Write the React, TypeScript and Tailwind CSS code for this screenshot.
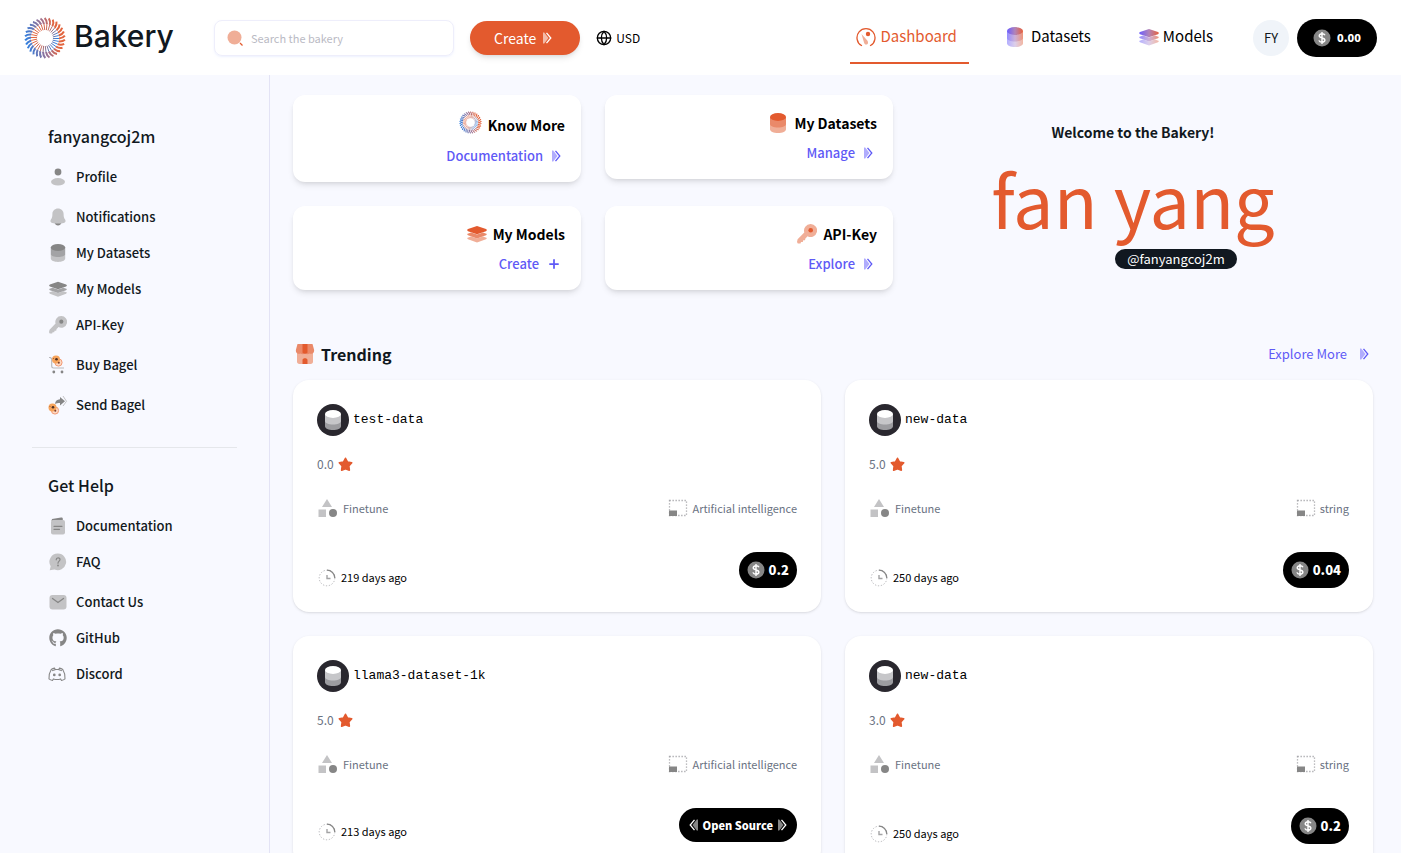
import type { ReactNode } from "react"
import { Globe, Plus } from "lucide-react"
import { FaGithub } from "react-icons/fa"

const sans = "font-['Noto_Sans_CJK_SC','Noto_Sans',sans-serif]"

const accountLinks = [
  { label: "Profile", icon: <ProfileIcon />, spaced: false },
  { label: "Notifications", icon: <BellIcon />, spaced: true },
  { label: "My Datasets", icon: <CylinderIcon tone="gray" className="mx-auto h-[18px] w-[18px]" />, spaced: false },
  { label: "My Models", icon: <LayersIcon tone="gray" className="mx-auto h-[18px] w-[18px]" />, spaced: false },
  { label: "API-Key", icon: <KeyIcon tone="gray" className="mx-auto h-[18px] w-[18px]" />, spaced: false },
  { label: "Buy Bagel", icon: <CartIcon />, spaced: true },
  { label: "Send Bagel", icon: <SendIcon />, spaced: true },
]

const helpLinks = [
  { label: "Documentation", icon: <DocIcon />, spaced: false },
  { label: "FAQ", icon: <FaqIcon />, spaced: false },
  { label: "Contact Us", icon: <MailIcon />, spaced: true },
  { label: "GitHub", icon: <FaGithub className="mx-auto h-[18px] w-[18px] text-[#868686]" />, spaced: false },
  { label: "Discord", icon: <DiscordIcon />, spaced: false },
]

const trending = [
  { name: "test-data", rating: "0.0", type: "Artificial intelligence", age: "219 days ago", price: "0.2" },
  { name: "new-data", rating: "5.0", type: "string", age: "250 days ago", price: "0.04" },
  { name: "llama3-dataset-1k", rating: "5.0", type: "Artificial intelligence", age: "213 days ago", price: null },
  { name: "new-data", rating: "3.0", type: "string", age: "250 days ago", price: "0.2" },
]

const tones = {
  gray: ["#868686", "#a3a3a5", "#c3c3c5"],
  orange: ["#e35a2e", "#ea8969", "#f0ae97"],
  light: ["#ffffff", "#c6c6c9", "#9c9ca0"],
  mixed: ["url(#mixTop)", "url(#mixMid)", "url(#mixLow)"],
}

type Tone = keyof typeof tones

function MixDefs() {
  return (
    <defs>
      <linearGradient id="mixTop">
        <stop offset="0" stopColor="#6a5cff" />
        <stop offset=".5" stopColor="#b184b8" />
        <stop offset="1" stopColor="#e8603a" />
      </linearGradient>
      <linearGradient id="mixMid">
        <stop offset="0" stopColor="#958eff" />
        <stop offset=".5" stopColor="#cbb0d8" />
        <stop offset="1" stopColor="#ee957a" />
      </linearGradient>
      <linearGradient id="mixLow">
        <stop offset="0" stopColor="#b3aeff" />
        <stop offset=".5" stopColor="#dccfea" />
        <stop offset="1" stopColor="#f2b6a2" />
      </linearGradient>
    </defs>
  )
}

function CylinderIcon({ tone, className }: { tone: Tone; className: string }) {
  const [top, mid, low] = tones[tone]
  return (
    <svg viewBox="0 0 20 20" className={className} aria-hidden="true">
      {tone === "mixed" && <MixDefs />}
      <path d="M2 11v5.200c0 2.200 3.500 3.800 8 3.800s8-1.600 8-3.800V11z" fill={low} />
      <path d="M2 4v7c0 2 3.500 3.500 8 3.500s8-1.500 8-3.500V4z" fill={mid} />
      <ellipse cx="10" cy="4" rx="8" ry="3.900" fill={top} />
    </svg>
  )
}

function LayersIcon({ tone, className }: { tone: Tone; className: string }) {
  const [top, mid, low] = tones[tone]
  return (
    <svg viewBox="0 0 20 20" className={className} aria-hidden="true">
      {tone === "mixed" && <MixDefs />}
      <path d="M0 14l4-1.500 6 2 6-2 4 1.500-1 1.300-9 3.200-9-3.200z" fill={low} />
      <path d="M0 10l4-1.500 6 2 6-2 4 1.500-1 1.300-9 3.200-9-3.200z" fill={mid} />
      <path d="M0 6l1-1 9-3 9 3 1 1-1 1.200-9 3-9-3z" fill={top} />
    </svg>
  )
}

function KeyIcon({ tone, className }: { tone: Tone; className: string }) {
  const [dark, , pale] = tones[tone]
  return (
    <svg viewBox="0 0 20 20" className={className} aria-hidden="true">
      <path
        d="M13.500 0a6.500 6.500 0 0 0-6.200 8.400L.6 15.200 0 18l.8 1.500H3.500l.5-1.400h1.800l.4-1.800H8l.4-1.900 1.500-1.300.6-.9A6.500 6.500 0 1 0 13.500 0z"
        fill={pale}
      />
      <circle cx="13.700" cy="6.300" r="2.300" fill={dark} />
    </svg>
  )
}

function ProfileIcon() {
  return (
    <svg viewBox="0 0 20 20" className="h-5 w-5" aria-hidden="true">
      <circle cx="10" cy="5" r="3.400" fill="#868686" />
      <ellipse cx="10" cy="14.800" rx="7" ry="3.700" fill="#c3c3c5" />
    </svg>
  )
}

function BellIcon() {
  return (
    <svg viewBox="0 0 20 20" className="h-5 w-5" aria-hidden="true">
      <path d="M6.500 15.500h7c-.5 1.800-1.800 3-3.500 3s-3-1.200-3.500-3z" fill="#868686" />
      <path
        d="M10 1.500c-3.200 0-5.600 2.400-5.600 5.500 0 3-.4 4-1.500 5.500-1.100 1.700-.2 3.200 1.300 3.500 3.800.8 7.800.8 11.600 0 1.500-.3 2.400-1.800 1.300-3.500-1.100-1.500-1.500-2.500-1.500-5.500 0-3.100-2.400-5.500-5.600-5.500z"
        fill="#c3c3c5"
      />
    </svg>
  )
}

function Bagels() {
  return (
    <>
      <circle cx="10.500" cy="7.500" r="3.600" fill="#fdd9c4" stroke="#f39a73" />
      <circle cx="8" cy="4.500" r="4" fill="#f6a45c" />
      <circle cx="8.500" cy="4.300" r="1.300" fill="#4c2e24" />
      <circle cx="5.500" cy="3.500" r=".6" fill="#a85b2b" />
      <circle cx="10.800" cy="7.800" r="1" fill="#7c3f2c" />
    </>
  )
}

function CartIcon() {
  return (
    <svg viewBox="0 0 20 20" className="h-5 w-5" aria-hidden="true">
      <path d="M1 2.500h1.500l1.200 1.300v7.500c0 1.200.7 1.700 1.800 1.700H16" fill="none" stroke="#b9b9bc" strokeWidth="1.200" />
      <circle cx="5.800" cy="17" r="1.400" fill="#868686" />
      <circle cx="14" cy="17" r="1.400" fill="#868686" />
      <Bagels />
    </svg>
  )
}

function SendIcon() {
  return (
    <svg viewBox="0 0 20 20" className="h-5 w-5 overflow-visible" aria-hidden="true">
      <path d="M7 9c.3-3 2-4.600 5-4.800V2l5 4.300-5 4.200V8C9.800 8 8.500 8.300 7 9z" fill="#868686" />
      <path d="M15 1l3.500 5.300L15 11" fill="none" stroke="#c3c3c5" />
      <g transform="translate(-3.500 8)">
        <Bagels />
      </g>
    </svg>
  )
}

function DocIcon() {
  return (
    <svg viewBox="0 0 20 20" className="h-5 w-5" aria-hidden="true">
      <path d="M4 3l9-1.500c1-.2 1.800.3 1.800 1.200V5H3.500z" fill="#868686" />
      <rect x="3" y="4" width="14" height="14.500" rx="2" fill="#c3c3c5" />
      <path d="M6 10.300h8M6 13.300h5.500" stroke="#868686" strokeWidth="1.200" strokeLinecap="round" />
    </svg>
  )
}

function FaqIcon() {
  return (
    <svg viewBox="0 0 20 20" className="h-5 w-5" aria-hidden="true">
      <path d="M10 1.500a8.300 8.300 0 1 1-3.500 15.900l-4.800.8 1-4A8.300 8.300 0 0 1 10 1.500z" fill="#c3c3c5" />
      <path
        d="M8.200 7.800c0-2.600 3.800-2.600 3.800-.2 0 1.500-2 1.700-2 3.600"
        fill="none"
        stroke="#868686"
        strokeWidth="1.200"
        strokeLinecap="round"
      />
      <circle cx="10" cy="13.500" r=".9" fill="#868686" />
    </svg>
  )
}

function MailIcon() {
  return (
    <svg viewBox="0 0 20 20" className="h-5 w-5" aria-hidden="true">
      <rect x="1.500" y="3" width="17" height="14.500" rx="3" fill="#c3c3c5" />
      <path d="M4.500 6.500L10 10.500l5.500-4" fill="none" stroke="#868686" strokeWidth="1.300" strokeLinecap="round" />
    </svg>
  )
}

function DiscordIcon() {
  return (
    <svg viewBox="0 0 20 20" className="h-[18px] w-[18px]" fill="none" stroke="#868686" strokeWidth="1.200" aria-hidden="true">
      <path d="M6 15.500c2.400.8 5.600.8 8 0l1 1.700c1.500-.3 2.800-.9 3.900-1.800.3-4-.6-7.400-2.500-10.400-1.100-.8-2.300-1.300-3.600-1.500l-.9 1.600c-1.200-.2-2.600-.2-3.800 0l-.9-1.600C5.900 3.700 4.700 4.200 3.600 5 1.700 8 .8 11.400 1.100 15.400c1.100.9 2.400 1.500 3.900 1.800z" />
      <path d="M4.500 6.500c1-.7 2-1 3.500-1.300M15.500 6.500c-1-.7-2-1-3.500-1.300" />
      <circle cx="7" cy="11" r="1.500" fill="#868686" stroke="none" />
      <circle cx="13" cy="11" r="1.500" fill="#868686" stroke="none" />
    </svg>
  )
}

function Chevrons({ tone, className }: { tone: "white" | "indigo" | "gray"; className: string }) {
  const line = tone === "indigo" ? "#5f5af6" : "#ffffff"
  const fill = tone === "indigo" ? "#b0acfd" : tone === "gray" ? "#868686" : "#f3bba8"
  return (
    <svg viewBox="0 0 10 12" className={className} aria-hidden="true">
      <path d="M1 .5h1.200L6.500 6l-4.300 5.500H1z" fill={fill} />
      <path d="M4.500 .8L8.800 6l-4.300 5.200" fill="none" stroke={line} strokeWidth="1.300" />
    </svg>
  )
}

// Ring of twisted spokes, each drawn as two coloured halves
function BagelLogo({ className }: { className: string }) {
  const point = (r: number, deg: number) => {
    const a = (deg * Math.PI) / 180
    return `${(21 + r * Math.cos(a)).toFixed(2)} ${(21 + r * Math.sin(a)).toFixed(2)}`
  }
  const spokes = Array.from({ length: 30 }, (_, i) => i * 12)
  return (
    <svg viewBox="0 0 42 42" className={className} fill="none" aria-hidden="true">
      <defs>
        <linearGradient id="ringOuter" gradientUnits="userSpaceOnUse" x1="2" y1="26" x2="40" y2="18">
          <stop offset="0" stopColor="#2f7fe0" />
          <stop offset=".5" stopColor="#a0708f" />
          <stop offset=".8" stopColor="#e2653f" />
        </linearGradient>
        <linearGradient id="ringInner" gradientUnits="userSpaceOnUse" x1="12" y1="16" x2="32" y2="25">
          <stop offset="0" stopColor="#e2653f" />
          <stop offset=".5" stopColor="#c26c63" />
          <stop offset="1" stopColor="#2f7fe0" />
        </linearGradient>
      </defs>
      {spokes.map((deg) => (
        <g key={deg}>
          <path
            d={`M${point(20, deg - 7)}Q${point(18, deg)} ${point(14, deg + 2)}`}
            stroke="url(#ringOuter)"
            strokeWidth="2"
          />
          <path
            d={`M${point(14, deg + 2)}L${point(8, deg + 4)}`}
            stroke="url(#ringInner)"
            strokeWidth="1"
          />
        </g>
      ))}
    </svg>
  )
}

function DashboardIcon() {
  return (
    <svg viewBox="0 0 20 20" className="h-5 w-5" aria-hidden="true">
      <path d="M5.500 18.500a9 9 0 1 1 9 0" fill="none" stroke="#e35a2e" strokeWidth="1.300" strokeLinecap="round" />
      <path d="M5.500 7l5.800 6.500c1.200 1.500 1 3.500-.5 4-1.500.4-2.500-.6-2.800-2z" fill="#f0ae97" />
      <circle cx="12" cy="7" r="2.200" fill="#e35a2e" />
    </svg>
  )
}

function CoinIcon({ className }: { className: string }) {
  return (
    <svg viewBox="0 0 18 18" className={className} aria-hidden="true">
      <circle cx="9" cy="9" r="8.500" fill="#868686" />
      <path
        d="M12 6.300C11.500 5.200 10.400 4.800 9 4.800c-1.600 0-2.800.7-2.800 2 0 3 5.700 1.300 5.700 4.300 0 1.400-1.300 2.100-2.900 2.100-1.500 0-2.700-.6-3.100-1.800M9 3v12"
        fill="none"
        stroke="#fff"
        strokeWidth="1.400"
      />
    </svg>
  )
}

function StoreIcon() {
  return (
    <svg viewBox="0 0 20 20" className="h-5 w-5" aria-hidden="true">
      <path d="M2 8h16v9.500c0 1.500-.8 2.500-2.500 2.500h-11C2.800 20 2 19 2 17.500z" fill="#f0ae97" />
      <path d="M2.500 0h15L19 5.500c.8 3.500-2 5-4.500 4-1.500 1-3 1-4.500 0-1.500 1-3 1-4.500 0-2.500 1-5.300-.5-4.500-4z" fill="#ea8969" />
      <path d="M7.500 0h5v8.500c-.5 1.500-4.500 1.500-5 0zM7.500 20v-4c0-2.500 5-2.500 5 0v4z" fill="#e35a2e" />
    </svg>
  )
}

function StarIcon() {
  return (
    <svg viewBox="0 0 14 14" className="h-[15px] w-[15px]" aria-hidden="true">
      <path
        d="M7 1.200l1.900 3.500 3.900.7-2.700 2.900.5 4L7 10.900l-3.600 1.400.5-4-2.700-2.900 3.900-.7z"
        fill="#e35a2e"
        stroke="#e35a2e"
        strokeWidth="1.500"
        strokeLinejoin="round"
      />
    </svg>
  )
}

function ShapesIcon() {
  return (
    <svg viewBox="0 0 20 20" className="h-5 w-5" aria-hidden="true">
      <path d="M10 1l5 8H5z" fill="#c3c3c5" />
      <rect x="1.500" y="11.500" width="7.500" height="7.500" fill="#c3c3c5" />
      <circle cx="16" cy="15" r="4" fill="#868686" />
    </svg>
  )
}

function FrameIcon() {
  return (
    <svg viewBox="0 0 20 20" className="h-5 w-5" aria-hidden="true">
      <rect x="1.500" y="2.500" width="17" height="15" fill="none" stroke="#a9a9ad" strokeWidth="1.300" strokeDasharray="1.300 1.700" />
      <rect x="1" y="12.500" width="8" height="5.500" fill="#868686" />
    </svg>
  )
}

function ClockIcon() {
  return (
    <svg viewBox="0 0 20 20" className="h-5 w-5" fill="none" aria-hidden="true">
      <circle cx="10" cy="11" r="7.800" stroke="#b4b4b8" strokeDasharray="1.300 1.700" />
      <path d="M10 3.200a7.800 7.800 0 0 1 7.800 7.800" stroke="#868686" strokeWidth="1.200" />
      <path d="M10 8v3.500h3.500" stroke="#a3a3a5" strokeWidth="1.400" />
    </svg>
  )
}

function Header() {
  return (
    <header className="flex h-[75px] shrink-0 items-center bg-white px-6">
      <a href="#" className="flex items-center gap-2">
        <BagelLogo className="h-[42px] w-[42px]" />
        <span className="mb-1 w-[100px] font-['Inter',sans-serif] text-[30px] leading-8 font-medium text-[#111820]">
          Bakery
        </span>
      </a>

      <label className="ml-10 flex h-9 w-60 items-center gap-2 rounded-lg border border-[#eeeefb] px-3 shadow-xs shadow-indigo-50">
        <svg viewBox="0 0 16 16" className="h-4 w-4" aria-hidden="true">
          <circle cx="7.500" cy="7.500" r="7" fill="#f0ae97" />
          <path d="M13 13l2.500 2.500" stroke="#e35a2e" strokeWidth="1.300" />
        </svg>
        <input
          type="search"
          aria-label="Search"
          placeholder="Search the bakery"
          className="min-w-0 flex-1 bg-transparent text-[11px] leading-4 outline-none placeholder:text-[#babac4]"
        />
      </label>

      <button className="ml-4 flex h-[34px] items-center gap-1.5 rounded-full bg-[#e35a2e] pr-7 pl-6 text-sm text-white shadow-md">
        Create
        <Chevrons tone="white" className="h-3 w-2.5" />
      </button>
      <button className="ml-4 flex items-center gap-1 text-xs text-black">
        <Globe className="h-4 w-4" />
        USD
      </button>

      <nav className="ml-auto flex h-[53px] items-center gap-8 text-[15px] text-black">
        <a href="#" className="flex h-full items-center gap-1 border-b-2 border-[#e35a2e] pr-3 pl-1.5 text-[#e35a2e]">
          <DashboardIcon />
          Dashboard
        </a>
        <a href="#" className="flex h-full items-center gap-1.5 border-b-2 border-transparent pr-2.5 pl-1">
          <CylinderIcon tone="mixed" className="h-5 w-5" />
          Datasets
        </a>
        <a href="#" className="flex h-full items-center gap-1 border-b-2 border-transparent pr-3 pl-1.5">
          <LayersIcon tone="mixed" className="h-5 w-5" />
          Models
        </a>
      </nav>
      <button className="ml-7 h-9 w-9 rounded-full bg-[#f0f4f9] text-[13px] text-[#111820]">FY</button>
      <button className="ml-2 flex h-[38px] items-center gap-1.5 rounded-full bg-black px-4 text-[11px] font-black text-white">
        <CoinIcon className="h-[18px] w-[18px]" />
        0.00
      </button>
    </header>
  )
}

function SideList({ links }: { links: typeof accountLinks }) {
  return (
    <ul>
      {links.map((link) => (
        <li key={link.label} className={link.spaced ? "mt-1" : ""}>
          <a href="#" className="flex h-9 items-center gap-2 text-[13px] font-medium">
            <span className="w-5">{link.icon}</span>
            {link.label}
          </a>
        </li>
      ))}
    </ul>
  )
}

function Sidebar() {
  return (
    <aside className="w-[270px] shrink-0 border-r border-[#e3e3f5] px-8 pt-12 text-[#111820]">
      <div className="px-4">
        <h2 className="mb-2.5 text-base leading-[26px] font-medium">fanyangcoj2m</h2>
        <SideList links={accountLinks} />
      </div>
      <hr className="my-6 border-[#e5e7eb]" />
      <div className="px-4">
        <h2 className="mb-2.5 text-base leading-[26px] font-medium">Get Help</h2>
        <SideList links={helpLinks} />
      </div>
    </aside>
  )
}

function ActionCard({
  title,
  icon,
  action,
  actionIcon,
}: {
  title: string
  icon: ReactNode
  action: string
  actionIcon: ReactNode
}) {
  return (
    <section className="rounded-xl bg-white p-4 shadow-md">
      <h3 className="flex min-h-6 items-center justify-end gap-1.5 text-sm leading-[22px] font-bold text-black">
        {icon}
        {title}
      </h3>
      <a href="#" className="mt-2 flex h-5 items-center justify-end gap-2 pr-1 text-[13px] font-medium text-[#5f5af6]">
        {action}
        {actionIcon}
      </a>
    </section>
  )
}

function TrendingCard({ item }: { item: (typeof trending)[number] }) {
  return (
    <article className="rounded-2xl bg-white p-6 shadow-sm">
      <div className="flex items-center gap-1">
        <span className="flex h-8 w-8 items-center justify-center rounded-full bg-[#29272e]">
          <CylinderIcon tone="light" className="h-5 w-5" />
        </span>
        <h3 className="font-['Liberation_Mono',monospace] text-[13px] text-black">{item.name}</h3>
      </div>
      <p className="mt-4 flex h-6 items-center gap-1 text-xs text-gray-500">
        {item.rating}
        <StarIcon />
      </p>
      <div className="mt-5 flex h-6 items-center justify-between text-[11px] text-gray-500">
        <span className="flex items-center gap-1.5">
          <ShapesIcon />
          Finetune
        </span>
        <span className="flex items-center gap-1">
          <FrameIcon />
          {item.type}
        </span>
      </div>
      <div className="mt-8 flex items-end justify-between">
        <span className="flex h-[22px] items-center gap-1 text-[11px] text-black">
          <ClockIcon />
          {item.age}
        </span>
        {item.price ? (
          <button className="flex h-9 items-center gap-1 rounded-full bg-black px-2 text-[13px] font-black text-white">
            <CoinIcon className="h-[18px] w-[18px]" />
            {item.price}
          </button>
        ) : (
          <button className="flex h-[34px] items-center gap-1 rounded-full bg-black px-2.5 text-[11px] font-black text-white">
            <Chevrons tone="gray" className="h-3 w-2.5 rotate-180" />
            Open Source
            <Chevrons tone="gray" className="h-3 w-2.5" />
          </button>
        )}
      </div>
    </article>
  )
}

export default function App() {
  const arrow = <Chevrons tone="indigo" className="h-3 w-2.5" />
  return (
    <div className={`flex h-screen flex-col bg-[#f8f9ff] ${sans}`}>
      <Header />
      <div className="flex min-h-0 flex-1">
        <Sidebar />
        <main className="min-w-0 flex-1 overflow-y-auto pt-5 pr-7 pl-[23px] [scrollbar-width:none]">
          <div className="flex">
            <div className="grid flex-5 grid-cols-2 items-start gap-6">
              <ActionCard
                title="Know More"
                icon={<BagelLogo className="mb-1 h-[23px] w-[23px]" />}
                action="Documentation"
                actionIcon={arrow}
              />
              <ActionCard
                title="My Datasets"
                icon={<CylinderIcon tone="orange" className="h-5 w-5" />}
                action="Manage"
                actionIcon={arrow}
              />
              <ActionCard
                title="My Models"
                icon={<LayersIcon tone="orange" className="h-5 w-5" />}
                action="Create"
                actionIcon={<Plus className="h-3.5 w-3.5" strokeWidth={3} />}
              />
              <ActionCard
                title="API-Key"
                icon={<KeyIcon tone="orange" className="h-5 w-5" />}
                action="Explore"
                actionIcon={arrow}
              />
            </div>
            <div className="flex flex-4 flex-col items-center pt-[27px] text-[#111820]">
              <p className="text-sm leading-5 font-bold">Welcome to the Bakery!</p>
              <h1 className="mt-6 mb-[19px] text-7xl leading-16 text-[#e35a2e]">fan yang</h1>
              <span className="ml-[86px] flex h-5 items-center rounded-full bg-[#111820] px-3 text-[13px] leading-4 text-white">
                @fanyangcoj2m
              </span>
            </div>
          </div>

          <div className="mt-12 flex h-8 items-center justify-between">
            <h2 className="flex items-center gap-1.5 pl-0.5 text-base font-bold text-[#111820]">
              <StoreIcon />
              Trending
            </h2>
            <a href="#" className="flex items-center gap-3 pr-1 text-[13px] text-[#5f5af6]">
              Explore More
              <Chevrons tone="indigo" className="h-3 w-2.5" />
            </a>
          </div>
          <div className="mt-2.5 grid grid-cols-2 items-start gap-6">
            {trending.map((item, i) => (
              <TrendingCard key={i} item={item} />
            ))}
          </div>
        </main>
      </div>
    </div>
  )
}
